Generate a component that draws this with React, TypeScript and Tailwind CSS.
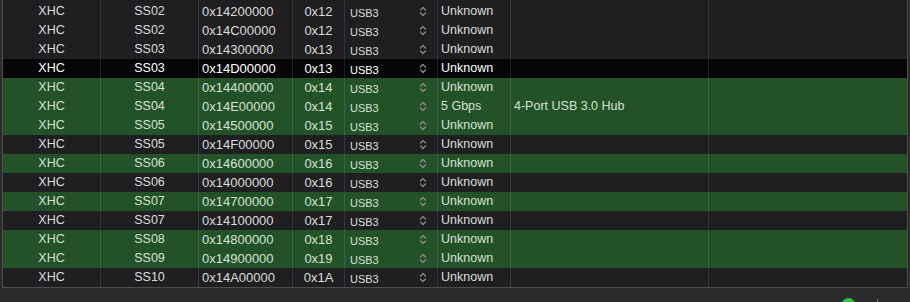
import React from "react";

type Port = {
  name: string;
  addr: string;
  idx: string;
  speed: string;
  desc: string;
  tone: "dark" | "green" | "sel";
};

const ports: Port[] = [
  { name: "SS02", addr: "0x14200000", idx: "0x12", speed: "Unknown", desc: "", tone: "dark" },
  { name: "SS02", addr: "0x14C00000", idx: "0x12", speed: "Unknown", desc: "", tone: "dark" },
  { name: "SS03", addr: "0x14300000", idx: "0x13", speed: "Unknown", desc: "", tone: "dark" },
  { name: "SS03", addr: "0x14D00000", idx: "0x13", speed: "Unknown", desc: "", tone: "sel" },
  { name: "SS04", addr: "0x14400000", idx: "0x14", speed: "Unknown", desc: "", tone: "green" },
  { name: "SS04", addr: "0x14E00000", idx: "0x14", speed: "5 Gbps", desc: "4-Port USB 3.0 Hub", tone: "green" },
  { name: "SS05", addr: "0x14500000", idx: "0x15", speed: "Unknown", desc: "", tone: "green" },
  { name: "SS05", addr: "0x14F00000", idx: "0x15", speed: "Unknown", desc: "", tone: "dark" },
  { name: "SS06", addr: "0x14600000", idx: "0x16", speed: "Unknown", desc: "", tone: "green" },
  { name: "SS06", addr: "0x14000000", idx: "0x16", speed: "Unknown", desc: "", tone: "dark" },
  { name: "SS07", addr: "0x14700000", idx: "0x17", speed: "Unknown", desc: "", tone: "green" },
  { name: "SS07", addr: "0x14100000", idx: "0x17", speed: "Unknown", desc: "", tone: "dark" },
  { name: "SS08", addr: "0x14800000", idx: "0x18", speed: "Unknown", desc: "", tone: "green" },
  { name: "SS09", addr: "0x14900000", idx: "0x19", speed: "Unknown", desc: "", tone: "green" },
  { name: "SS10", addr: "0x14A00000", idx: "0x1A", speed: "Unknown", desc: "", tone: "dark" },
];

const toneClass = {
  dark: "bg-[#1f1f21] text-[#dcdcdc]",
  green: "bg-[#245228] text-[#d2e2d2]",
  sel: "bg-[#060608] text-white",
};

function Chevrons() {
  return (
    <svg width="8" height="11" viewBox="0 0 8 11" fill="none" stroke="#8c8c8c" strokeWidth="1.2" strokeLinecap="round" strokeLinejoin="round">
      <path d="M1.5 4 L4 1.5 L6.5 4" />
      <path d="M1.5 7 L4 9.5 L6.5 7" />
    </svg>
  );
}

function Row({ p, h = "h-[19px]" }: { p?: Port; h?: string }) {
  const cell = "border-r border-white/10 flex items-center shrink-0";
  return (
    <div className={`flex ${h} ${p ? toneClass[p.tone] : toneClass.dark}`}>
      <div className={`${cell} w-[98px] justify-center text-[12.5px]`}>{p && "XHC"}</div>
      <div className={`${cell} w-[98px] justify-center text-[12.5px]`}>{p?.name}</div>
      <div className={`${cell} w-[94px] pl-[3px] text-[13px]`}>{p?.addr}</div>
      <div className={`${cell} w-[52px] justify-center text-[13px]`}>{p?.idx}</div>
      <div className={`${cell} w-[93px] pl-[5px] pr-[10px] justify-between text-[11px]`}>
        {p && (
          <>
            <span className="pt-[3px]">USB3</span>
            <Chevrons />
          </>
        )}
      </div>
      <div className={`${cell} w-[73px] pl-[3px] text-[12.5px]`}>{p?.speed}</div>
      <div className={`${cell} w-[198px] pl-[3px] text-[12.5px]`}>{p?.desc}</div>
      <div className="w-[198px] shrink-0" />
    </div>
  );
}

export default function App() {
  return (
    <div
      className="w-[910px] h-[302px] bg-[#2b2b2b] overflow-hidden"
      style={{ fontFamily: '"Liberation Sans", Arial, sans-serif' }}
    >
      <div className="ml-[2px] w-[906px] border-x border-b border-[#4e4e4e] whitespace-nowrap">
        <Row h="h-[2px]" />
        {ports.map((p, i) => (
          <Row key={i} p={p} />
        ))}
      </div>
      <div className="flex items-start">
        <div className="ml-[842px] mt-[10px] w-[13px] h-[13px] rounded-full bg-[#3cc23f]" />
        <div className="ml-[22px] mt-[11px] w-px h-[4px] bg-[#777]" />
      </div>
    </div>
  );
}
